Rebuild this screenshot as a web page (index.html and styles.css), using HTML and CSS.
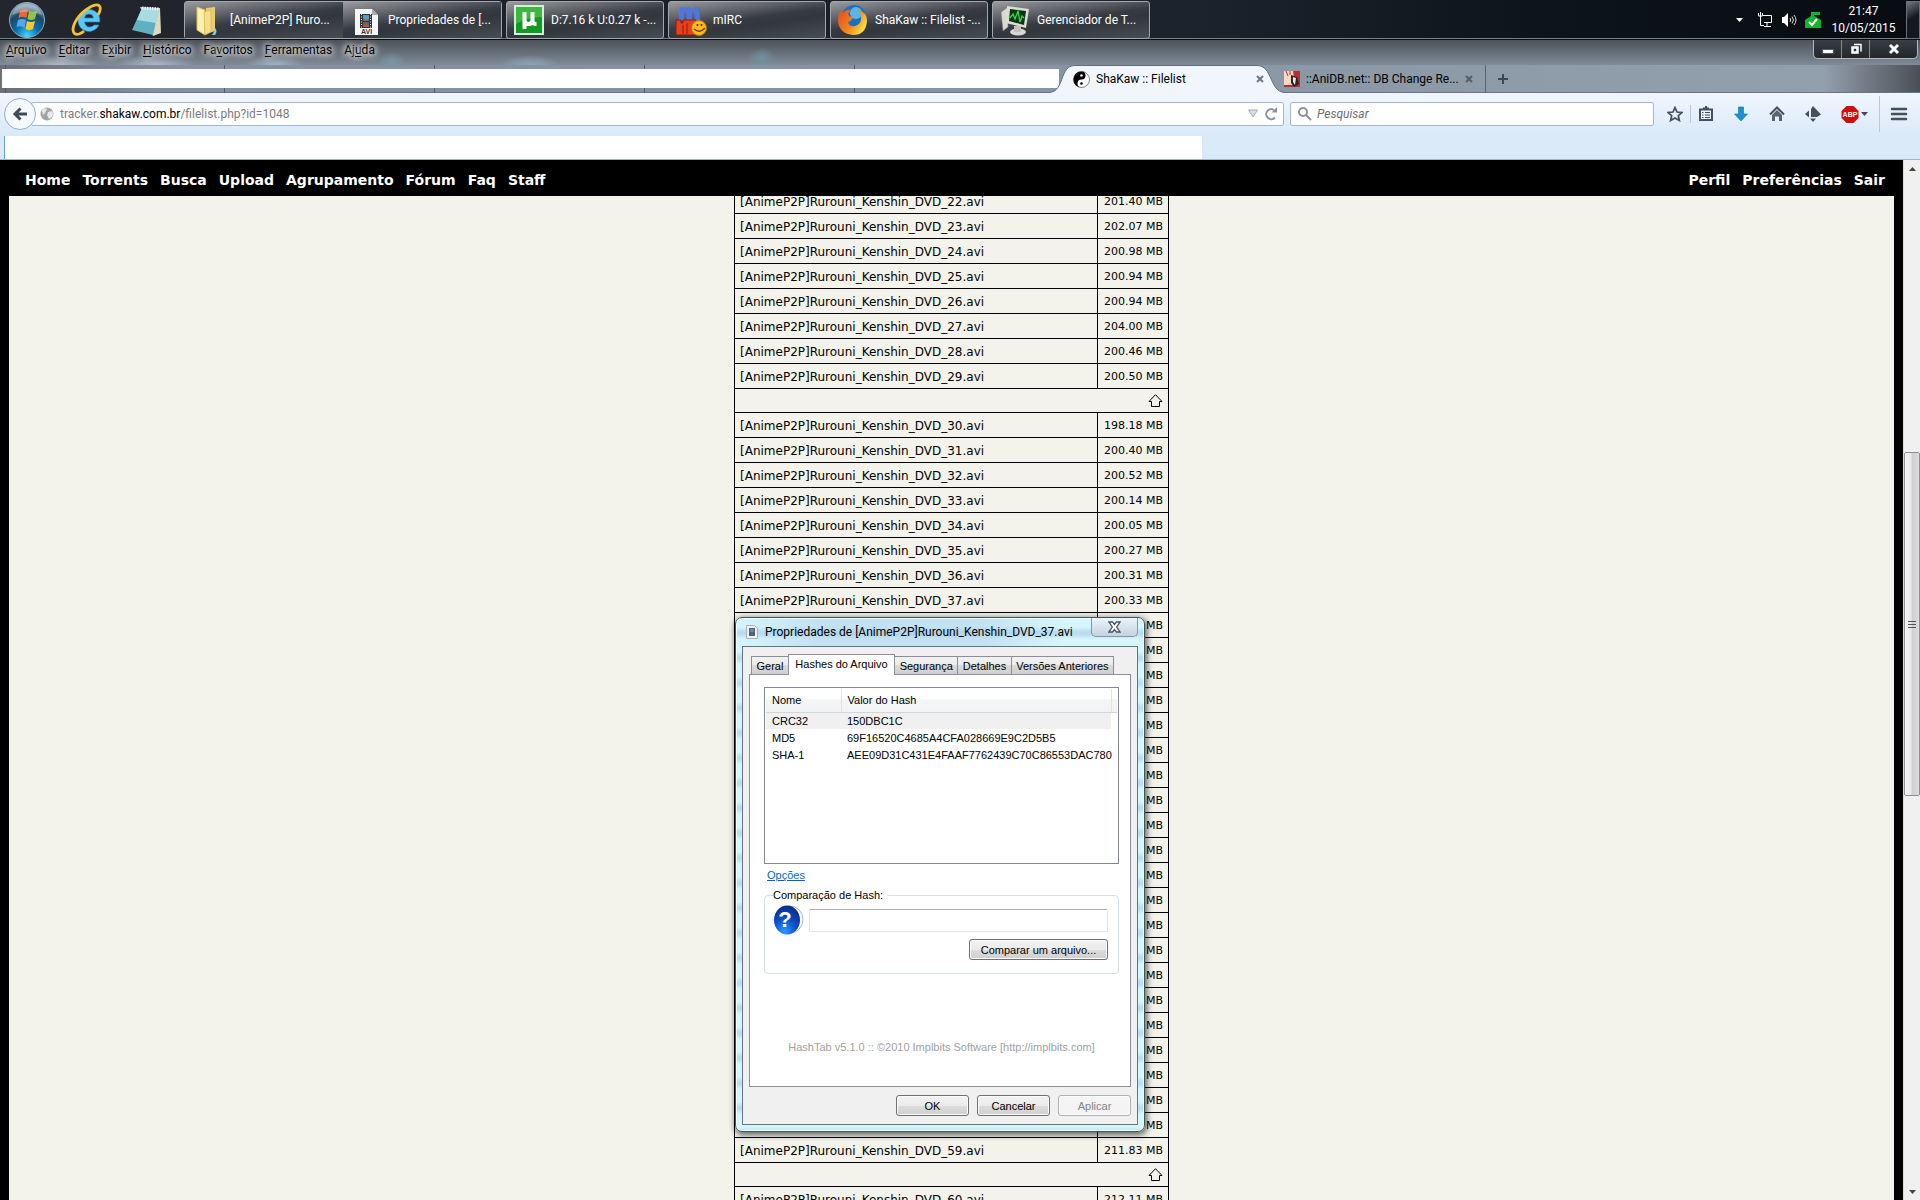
FILE: index.html
```html
<!DOCTYPE html>
<html lang="pt-BR">
<head>
<meta charset="utf-8">
<title>ShaKaw :: Filelist</title>
<link rel="stylesheet" href="styles.css">
</head>
<body>
<header class="taskbar">
  <div class="launchers">
    <button class="launch" aria-label="Iniciar"><svg width="38" height="38" viewBox="0 0 38 38"><defs><radialGradient id="orb" cx=".5" cy=".95" r=".85"><stop offset="0" stop-color="#3fd8ff"/><stop offset=".4" stop-color="#0c6dac"/><stop offset=".75" stop-color="#1d4766"/><stop offset="1" stop-color="#7d99ab"/></radialGradient></defs><circle cx="19" cy="19" r="17.500" fill="url(#orb)" stroke="#8fb0c4"/><path d="M12 10q4-3 8-1l-1.500 8q-4-2-8 0z" fill="#f0652f"/><path d="M21 10q4 2 8 0l-2 8q-4 2-7.500 0z" fill="#8ec63f"/><path d="M10 19q4-2 8 0l-1.500 8q-4-3-8-1z" fill="#4fa9ea"/><path d="M19 20q4 2 8 0l-2 8q-4 2-7.500 0z" fill="#fbc928"/><path d="M4 14a15.500 15.500 0 0 1 30 0q-15-7-30 0z" fill="#fff" opacity=".28"/></svg></button>
    <button class="launch" aria-label="Internet Explorer"><svg width="34" height="34" viewBox="0 0 34 34"><path d="M28 22a11 11 0 1 1 .8-6.500v3.500H13.500q1 5 5 5 3 0 4.500-2zM13.500 15h9q-.5-4-4.500-4t-4.500 4z" fill="#5cc6f5" stroke="#1f84c4" stroke-width=".7"/><path d="M27 12q4-7 1-9.500C24 0 12 7 6 16S1 33 8 31q3-1 5-3" fill="none" stroke="#f6c12e" stroke-width="2.800"/></svg></button>
    <button class="launch" aria-label="Bloco de notas"><svg width="34" height="34" viewBox="0 0 34 34"><path d="M10 4l20 1 1 25-8 3z" fill="#dcd9c0"/><path d="M12 5l17 1-6 26L2 27z" fill="#5fb1c2"/><path d="M12 5l17 1-3 14-19-3z" fill="#a9dbe3"/><path d="M12 5l17 1" stroke="#eef" stroke-width="3" stroke-dasharray="1.500 1"/></svg></button>
  </div>
  <nav class="tasks" aria-label="Janelas">
    <div class="group">
      <button class="task"><svg class="ti" viewBox="0 0 32 32"><path d="M14 4l9-1v24l-9 3z" fill="#e8cf73"/><path d="M5 3l8 3v25l-8-5z" fill="#fdf0aa" stroke="#d9bd5c"/><path d="M12 8l7-2v22l-6 3z" fill="#f6df8b" stroke="#cfae4b" stroke-width=".6"/><path d="M23 24q3 3 0 7h-3q3-4 3-7z" fill="#8cc9ec"/></svg><span>[AnimeP2P] Ruro...</span></button>
      <button class="task"><svg class="ti" viewBox="0 0 32 32"><path d="M5 5h17l6 6v20H5z" fill="#f6f6f6"/><path d="M22 5v6h6z" fill="#aaa"/><path d="M10 10h12v14H10z" fill="#333"/><path d="M13 11h6v6h-6z" fill="#4c9fd0"/><path d="M13 18h6v5h-6z" fill="#3b6d9e"/><path d="M13 14l3 2 3-1v2h-6zM13 21l3-1 3 2v1h-6z" fill="#c55135"/><path d="M11.500 10v14M20.500 10v14" stroke="#eee" stroke-dasharray="1 1.500"/><text x="16.500" y="30" text-anchor="middle" font-size="7" font-weight="700" fill="#333">AVI</text></svg><span>Propriedades de [...</span></button>
    </div>
    <button class="task"><svg class="ti" viewBox="0 0 32 32"><path d="M1 1h30v30H1z" fill="#d5efda"/><path d="M3 3h26v26H3z" fill="#109a23"/><path d="M3 3h26v10Q14 13 3 20z" fill="#3cb83f"/><path d="M11.500 8v17M11.500 8v8q0 4 4 4t4-4V8v9q0 3 4 3" fill="none" stroke="#fff" stroke-width="4"/></svg><span>D:7.16 k U:0.27 k -...</span></button>
    <button class="task"><svg class="ti" viewBox="0 0 32 32"><g class="wide-face"><text x="3" y="16" font-size="22" font-weight="700" fill="#4f76dc" stroke="#4f76dc" stroke-width="1.500">m</text></g><path d="M1 16h5v3h2v-3h13v8h-5l5 7H1z" fill="#e8401c" stroke="#8d1c08"/><path d="M12 19v11M8 21v9" stroke="#8d1c08"/><circle cx="24" cy="24" r="7.500" fill="#fdbb1f" stroke="#c77405"/><path d="M19 25q6 5 11-1" fill="none" stroke="#7c3a00" stroke-width="1.500"/><circle cx="22.500" cy="21" r="1" fill="#612"/><circle cx="26.500" cy="21" r="1" fill="#612"/></svg><span>mIRC</span></button>
    <button class="task"><svg class="ti" viewBox="0 0 32 32"><defs><linearGradient id="fx" x2="1" y2=".6"><stop offset="0" stop-color="#e5471e"/><stop offset=".6" stop-color="#f2851d"/><stop offset="1" stop-color="#ffe043"/></linearGradient></defs><circle cx="17" cy="13" r="12" fill="#1d6fc0"/><circle cx="19" cy="9" r="6" fill="#57b7ea"/><path d="M3 6l3 3q3-4 8-3l-3 4q1 3 5 3-1 4-5 5 1 5 7 4 7-2 6-9 0-5-4-8 10 3 10 12Q29 31 16 31 3 30 1 18q0-6 2-12z" fill="url(#fx)"/></svg><span>ShaKaw :: Filelist -...</span></button>
    <button class="task"><svg class="ti" viewBox="0 0 32 32"><path d="M2 8l7-5v20l-5 4z" fill="#d9d9d2" stroke="#777" stroke-width=".6"/><path d="M8 2l22 3-3 19-20-5z" fill="#ddddd5"/><path d="M11 5l16 2-2 14-15-4z" fill="#0a3413"/><path d="M11 14l3-4 2 5 3-8 2 11 2-6 2 2" fill="none" stroke="#2be04a" stroke-width="1.300"/><ellipse cx="19" cy="28" rx="8" ry="3.500" fill="#d8d8d2"/><path d="M15 22h7v6h-7z" fill="#c2c2bc"/></svg><span>Gerenciador de T...</span></button>
  </nav>
  <div class="tray">
    <svg width="8" height="38" viewBox="0 0 8 38"><path d="M0 17h7l-3.500 4z" fill="#fff"/></svg>
    <svg width="16" height="16" viewBox="0 0 16 16" fill="none" stroke="#fff"><path d="M5 3.500h9.500v7H7M10 11v3M7 14.500h7M1.500 1v3h4V1M3.500 0v4M3.500 4v9.500H7"/></svg>
    <svg width="16" height="16" viewBox="0 0 16 16"><path d="M1 5h2l4-4v14l-4-4H1z" fill="#fff"/><path d="M9 6q1.500 2 0 4M11 4.500q3 3.500 0 7M13 3q4 5 0 10" fill="none" stroke="#ddd"/></svg>
    <svg width="16" height="18" viewBox="0 0 16 18"><path d="M0 9l6-4V1h9v3H9v1l7 4v8H0z" fill="#12b52e"/><path d="M4 11l3 3 5-6" fill="none" stroke="#fff" stroke-width="2"/></svg>
    <div class="clock"><span>21:47</span><span>10/05/2015</span></div>
    <button class="peek" aria-label="Mostrar área de trabalho"></button>
  </div>
</header>

<section class="chrome">
  <div class="menurow">
    <nav class="menus" aria-label="Menu">
      <a href="#"><u>A</u>rquivo</a><a href="#"><u>E</u>ditar</a><a href="#">E<u>x</u>ibir</a><a href="#"><u>H</u>istórico</a><a href="#">Fa<u>v</u>oritos</a><a href="#"><u>F</u>erramentas</a><a href="#">Aj<u>u</u>da</a>
    </nav>
    <div class="winbtns">
      <button aria-label="Minimizar"><svg width="14" height="14" viewBox="0 0 14 14"><path d="M1.500 7.500h11v4h-11z" fill="#fff" stroke="#555a66"/></svg></button>
      <button aria-label="Restaurar"><svg width="14" height="14" viewBox="0 0 14 14" fill="none"><path d="M5 2.500h7v7" stroke="#fff" stroke-width="1.500"/><path d="M3.500 5.500h5v5h-5z" stroke="#fff" stroke-width="2.500"/></svg></button>
      <button class="wclose" aria-label="Fechar"><svg width="14" height="14" viewBox="0 0 14 14"><path d="M3 3l8 8M11 3l-8 8" stroke="#fff" stroke-width="3"/></svg></button>
    </div>
  </div>
  <div class="tabrow">
    <div class="hiddentabs"><div class="blanktabs"></div></div>
    <div class="tab active">
      <svg class="shape" viewBox="0 0 236 28" preserveAspectRatio="none"><path d="M0 27.500C16 27 10 .5 26 .5H208C224 .5 220 27 236 27.500V28H0z" fill="#f1f6fd"/><path d="M0 27.500C16 27 10 .5 26 .5H208C224 .5 220 27 236 27.500" fill="none" stroke="#5e6f82"/></svg>
      <svg width="17" height="17" viewBox="0 0 17 17"><circle cx="8.500" cy="8.500" r="8" fill="#fff" stroke="#333" stroke-width=".6"/><path d="M8.500.5a8 8 0 0 0 0 16a4 4 0 0 1 0-8a4 4 0 0 0 0-8z" fill="#000"/><circle cx="8.500" cy="4.500" r="1.300" fill="#fff"/><circle cx="8.500" cy="12.500" r="1.300" fill="#000"/></svg>
      <span class="tabtext">ShaKaw :: Filelist</span>
      <button class="x" aria-label="Fechar aba"><svg width="8" height="8" viewBox="0 0 8 8"><path d="M1 1l6 6M7 1l-6 6" stroke="#6c7783" stroke-width="2"/></svg></button>
    </div>
    <div class="tab second">
      <svg width="16" height="16" viewBox="0 0 16 16"><path d="M0 0h16v16H0z" fill="#c22a2f"/><path d="M0 0h9l2 14H0z" fill="#f3d9c6"/><path d="M2 0l2 5M6 0v4" stroke="#c22a2f"/><path d="M7 4l6 2 2 7-5 3-3-4z" fill="#2a2328"/><path d="M9 6l3 1-1 7-2-3z" fill="#e9ebee"/></svg>
      <span class="tabtext">::AniDB.net:: DB Change Re...</span>
      <button class="x" aria-label="Fechar aba"><svg width="8" height="8" viewBox="0 0 8 8"><path d="M1 1l6 6M7 1l-6 6" stroke="#535e69" stroke-width="2"/></svg></button>
    </div>
    <button class="plus" aria-label="Nova aba"><svg width="12" height="12" viewBox="0 0 12 12"><path d="M6 1v10M1 6h10" stroke="#3d4853" stroke-width="2"/></svg></button>
  </div>
  <div class="navrow">
    <button class="back" aria-label="Voltar"><svg width="16" height="16" viewBox="0 0 16 16"><path d="M15 8H4M8.500 2.500L3 8l5.500 5.500" fill="none" stroke="#3f4a56" stroke-width="3"/></svg></button>
    <div class="url">
      <svg width="14" height="14" viewBox="0 0 14 14"><circle cx="7" cy="7" r="6.500" fill="#a2a4a6"/><path d="M2 3q3-3 5-1L5 6 3 8zM8 5l4-1q2 3 0 6l-3 2-2-4z" fill="#e8e8e8"/></svg>
      <span class="addr">tracker.<b>shakaw.com.br</b>/filelist.php?id=1048</span>
      <svg width="10" height="9" viewBox="0 0 10 9"><path d="M.5 1h9L5 8z" fill="#d7dfe8" stroke="#9ca9b6"/></svg>
      <svg width="14" height="14" viewBox="0 0 14 14"><path d="M11 10.500A5 5 0 1 1 10 3" fill="none" stroke="#8593a1" stroke-width="2"/><path d="M7.500 5.500H13V0z" fill="#8593a1"/></svg>
    </div>
    <label class="search"><svg width="15" height="15" viewBox="0 0 15 15" fill="none" stroke="#8d9298" stroke-width="2"><circle cx="6" cy="6" r="4"/><path d="M9 9l5 5"/></svg><input type="text" placeholder="Pesquisar" aria-label="Pesquisar"></label>
    <div class="tools">
      <div class="pair">
        <button aria-label="Favorito"><svg width="16" height="16" viewBox="0 0 16 16"><path d="M8 1.500l2 4.500 5 .5-3.700 3.200 1.100 4.800L8 12l-4.400 2.500 1.100-4.800L1 6.500 6 6z" fill="none" stroke="#46505b" stroke-width="1.700"/></svg></button>
        <i class="sep"></i>
        <button aria-label="Lista"><svg width="16" height="16" viewBox="0 0 16 16" fill="none" stroke="#46505b"><path d="M2 3.500h12v10.500H2z" stroke-width="2"/><path d="M5 2.500h6M7 1h2" stroke-width="2"/><path d="M4 6.500h1.500M7 6.500h5M4 9h1.500M7 9h5M4 11.500h1.500M7 11.500h5"/></svg></button>
      </div>
      <button aria-label="Downloads"><svg width="16" height="16" viewBox="0 0 16 16"><path d="M5.500 1h5v7h4L8 15 1.500 8h4z" fill="#1c92d2" stroke="#0e6fa8" stroke-width=".6"/></svg></button>
      <button aria-label="Início"><svg width="16" height="16" viewBox="0 0 16 16"><path d="M1 8.500l7-7 7 7" fill="none" stroke="#46505b" stroke-width="2"/><path d="M3 9l5-5 5 5v6h-3v-4.500H6V15H3z" fill="#59636e"/></svg></button>
      <button aria-label="Complemento"><svg width="18" height="16" viewBox="0 0 18 16" fill="#46505b"><path d="M9 0l8 8.500-4 2.500H7V3zM1 8l4-3.500v7zM6 12.500h6L9 16z"/></svg></button>
      <div class="pair end">
        <button aria-label="Adblock Plus"><svg width="28" height="18" viewBox="0 0 28 18"><path d="M5.500 1h7l5 5v7l-5 5h-7l-5-5V6z" fill="#d00c0c"/><text x="9" y="12" text-anchor="middle" font-size="7" font-weight="700" fill="#fff">ABP</text><path d="M20 7h7l-3.500 4z" fill="#3d4853"/></svg></button>
        <i class="sep tall"></i>
        <button aria-label="Abrir menu"><svg width="18" height="14" viewBox="0 0 18 14"><path d="M2 2h14M2 7h14M2 12h14" stroke="#46505b" stroke-width="2.500" stroke-linecap="round"/></svg></button>
      </div>
    </div>
  </div>
  <div class="bookrow"><div class="blankbooks"></div></div>
</section>

<section class="view">
  <main class="site">
    <nav class="sitenav" aria-label="Site">
      <div><a href="#">Home</a><a href="#">Torrents</a><a href="#">Busca</a><a href="#">Upload</a><a href="#">Agrupamento</a><a href="#">Fórum</a><a href="#">Faq</a><a href="#">Staff</a></div>
      <div><a href="#">Perfil</a><a href="#">Preferências</a><a href="#">Sair</a></div>
    </nav>
    <div class="paper">
      <table class="files">
        <tbody>
          <tr><td>[AnimeP2P]Rurouni_Kenshin_DVD_22.avi</td><td>201.40 MB</td></tr>
          <tr><td>[AnimeP2P]Rurouni_Kenshin_DVD_23.avi</td><td>202.07 MB</td></tr>
          <tr><td>[AnimeP2P]Rurouni_Kenshin_DVD_24.avi</td><td>200.98 MB</td></tr>
          <tr><td>[AnimeP2P]Rurouni_Kenshin_DVD_25.avi</td><td>200.94 MB</td></tr>
          <tr><td>[AnimeP2P]Rurouni_Kenshin_DVD_26.avi</td><td>200.94 MB</td></tr>
          <tr><td>[AnimeP2P]Rurouni_Kenshin_DVD_27.avi</td><td>204.00 MB</td></tr>
          <tr><td>[AnimeP2P]Rurouni_Kenshin_DVD_28.avi</td><td>200.46 MB</td></tr>
          <tr><td>[AnimeP2P]Rurouni_Kenshin_DVD_29.avi</td><td>200.50 MB</td></tr>
          <tr class="up"><td colspan="2"><a href="#" aria-label="Topo"><svg width="15" height="13" viewBox="0 0 15 13"><path d="M7.500 .7L14 7.500h-2.500v5h-8v-5H1z" fill="none" stroke="#000"/></svg></a></td></tr>
          <tr><td>[AnimeP2P]Rurouni_Kenshin_DVD_30.avi</td><td>198.18 MB</td></tr>
          <tr><td>[AnimeP2P]Rurouni_Kenshin_DVD_31.avi</td><td>200.40 MB</td></tr>
          <tr><td>[AnimeP2P]Rurouni_Kenshin_DVD_32.avi</td><td>200.52 MB</td></tr>
          <tr><td>[AnimeP2P]Rurouni_Kenshin_DVD_33.avi</td><td>200.14 MB</td></tr>
          <tr><td>[AnimeP2P]Rurouni_Kenshin_DVD_34.avi</td><td>200.05 MB</td></tr>
          <tr><td>[AnimeP2P]Rurouni_Kenshin_DVD_35.avi</td><td>200.27 MB</td></tr>
          <tr><td>[AnimeP2P]Rurouni_Kenshin_DVD_36.avi</td><td>200.31 MB</td></tr>
          <tr><td>[AnimeP2P]Rurouni_Kenshin_DVD_37.avi</td><td>200.33 MB</td></tr>
          <tr><td></td><td>MB</td></tr>
          <tr><td></td><td>MB</td></tr>
          <tr><td></td><td>MB</td></tr>
          <tr><td></td><td>MB</td></tr>
          <tr><td></td><td>MB</td></tr>
          <tr><td></td><td>MB</td></tr>
          <tr><td></td><td>MB</td></tr>
          <tr><td></td><td>MB</td></tr>
          <tr><td></td><td>MB</td></tr>
          <tr><td></td><td>MB</td></tr>
          <tr><td></td><td>MB</td></tr>
          <tr><td></td><td>MB</td></tr>
          <tr><td></td><td>MB</td></tr>
          <tr><td></td><td>MB</td></tr>
          <tr><td></td><td>MB</td></tr>
          <tr><td></td><td>MB</td></tr>
          <tr><td></td><td>MB</td></tr>
          <tr><td></td><td>MB</td></tr>
          <tr><td></td><td>MB</td></tr>
          <tr><td></td><td>MB</td></tr>
          <tr><td></td><td>MB</td></tr>
          <tr><td>[AnimeP2P]Rurouni_Kenshin_DVD_59.avi</td><td>211.83 MB</td></tr>
          <tr class="up"><td colspan="2"><a href="#" aria-label="Topo"><svg width="15" height="13" viewBox="0 0 15 13"><path d="M7.500 .7L14 7.500h-2.500v5h-8v-5H1z" fill="none" stroke="#000"/></svg></a></td></tr>
          <tr><td>[AnimeP2P]Rurouni_Kenshin_DVD_60.avi</td><td>212.11 MB</td></tr>
        </tbody>
      </table>
    </div>
  </main>
  <div class="scroll">
    <svg width="17" height="17" viewBox="0 0 17 17"><path d="M5 11h7L8.500 7z" fill="#444"/></svg>
    <div class="track"><div class="thumb"><svg width="9" height="9" viewBox="0 0 9 9"><path d="M0 1.500h8M0 4.500h8M0 7.500h8" stroke="#555"/></svg></div></div>
    <svg width="17" height="17" viewBox="0 0 17 17"><path d="M5 7h7l-3.500 4z" fill="#444"/></svg>
  </div>
</section>

<section class="dialog" role="dialog" aria-labelledby="dlgtitle">
  <div class="dtitle">
    <svg width="12" height="14" viewBox="0 0 12 14"><path d="M.5.5h8l3 3v10H.5z" fill="#eef1f3" stroke="#aab2b8"/><path d="M3 3h6v8H3z" fill="#5c6066"/><path d="M4 4h4v3H4z" fill="#3d95cc"/></svg>
    <h1 id="dlgtitle">Propriedades de [AnimeP2P]Rurouni_Kenshin_DVD_37.avi</h1>
    <button class="dclose" aria-label="Fechar"><svg width="13" height="12" viewBox="0 0 13 12"><path d="M1 1h3.500l2 2.500 2-2.500H12L8.700 6l3.300 5H8.500l-2-2.500-2 2.500H1l3.300-5z" fill="#fff" stroke="#4c5263" stroke-width="1.300"/></svg></button>
  </div>
  <div class="dbody">
    <div class="dtabs" role="tablist">
      <button role="tab">Geral</button><button role="tab" class="on">Hashes do Arquivo</button><button role="tab">Segurança</button><button role="tab">Detalhes</button><button role="tab">Versões Anteriores</button>
    </div>
    <div class="panel">
      <div class="listbox">
        <table class="hashes">
          <thead><tr><th>Nome</th><th>Valor do Hash</th><th></th></tr></thead>
          <tbody>
            <tr class="sel"><td>CRC32</td><td>150DBC1C</td></tr>
            <tr><td>MD5</td><td>69F16520C4685A4CFA028669E9C2D5B5</td></tr>
            <tr><td>SHA-1</td><td>AEE09D31C431E4FAAF7762439C70C86553DAC780</td></tr>
          </tbody>
        </table>
      </div>
      <a class="opts" href="#">Opções</a>
      <fieldset class="cmp">
        <legend><label for="hash">Comparação de Hash:</label></legend>
        <div class="cmprow">
          <svg width="32" height="30" viewBox="0 0 32 30"><defs><radialGradient id="qb" cx=".4" cy=".9" r=".9"><stop offset="0" stop-color="#2f9bff"/><stop offset=".5" stop-color="#0c4fc9"/><stop offset="1" stop-color="#0a2c8c"/></radialGradient></defs><ellipse cx="17" cy="14.500" rx="13" ry="13.500" fill="#fff" stroke="#a9b0d8"/><ellipse cx="14" cy="15" rx="13" ry="14.500" fill="url(#qb)"/><text x="12" y="22" text-anchor="middle" font-size="22" font-weight="700" fill="#fff">?</text></svg>
          <input id="hash" type="text">
        </div>
        <button class="btn wide">Comparar um arquivo...</button>
      </fieldset>
      <p class="credit">HashTab v5.1.0 :: ©2010 Implbits Software [http://implbits.com]</p>
    </div>
    <div class="dfoot"><button class="btn">OK</button><button class="btn">Cancelar</button><button class="btn" disabled>Aplicar</button></div>
  </div>
</section>
</body>
</html>
```
FILE: styles.css
```css
* { box-sizing: border-box; }
body {
  margin: 0;
  height: 100vh;
  display: flex;
  flex-direction: column;
  overflow: hidden;
  position: relative;
  font: 12px/16px Roboto, "Open Sans", sans-serif;
  color: #000;
}
button { font: inherit; color: inherit; padding: 0; border: 0; background: none; display: flex; align-items: center; justify-content: center; }
svg { flex: none; display: block; }
a { color: inherit; text-decoration: none; }
svg text { font-family: "Liberation Sans", sans-serif; }
.wide-face text { font-family: "DejaVu Sans", sans-serif; }

/* taskbar */
.taskbar {
  height: 40px;
  flex: none;
  display: flex;
  background: linear-gradient(90deg, #23262c, #1a2027 40%, #1b242d 62%, #0d141b 80%, #080c12);
  border-bottom: 1px solid #0a0d10;
  box-shadow: inset 0 -1px #77828a;
  color: #fff;
}
.launchers { display: flex; width: 184px; padding-left: 8px; gap: 25px; align-items: center; }
.tasks { display: flex; gap: 4px; height: 39px; padding-top: 1px; }
.group { display: flex; border: 1px solid #a5a8ab; border-radius: 3px; }
.task {
  width: 158px;
  justify-content: flex-start;
  gap: 6px;
  padding-left: 6px;
  white-space: nowrap;
  border: 1px solid #a5a8ab;
  border-radius: 3px;
  background: linear-gradient(172deg, #9b9ba0 0, #5d6066 30%, #373c42 48%, #31373d 60%, #474d53);
}
.group .task { border: 0; border-radius: 0; padding-left: 7px; }
.ti { width: 32px; height: 32px; }
.tray { margin-left: auto; display: flex; align-items: center; gap: 8px; }
.tray > svg:first-child { margin-right: 5px; }
.clock { width: 69px; display: flex; flex-direction: column; align-items: center; line-height: 17px; }
.peek { width: 14px; height: 38px; border: 1px solid #6c7176; background: linear-gradient(150deg, #75797d, #15191d 45%); }

/* browser chrome */
.chrome { flex: none; display: flex; flex-direction: column; background: #dbeaf9; border-bottom: 1px solid #9fb5c9; }
.menurow {
  height: 25px;
  display: flex;
  justify-content: space-between;
  background:
    radial-gradient(ellipse 14px 10px at 392px 22px, #7796a8, transparent),
    radial-gradient(ellipse 14px 10px at 762px 18px, #6f929f, transparent),
    radial-gradient(ellipse 40px 10px at 60px 25px, #b0b9c8, transparent),
    radial-gradient(ellipse 40px 10px at 155px 25px, #b0b9c8, transparent),
    radial-gradient(ellipse 30px 10px at 275px 25px, #a3b2c4, transparent),
    radial-gradient(ellipse 30px 10px at 530px 25px, #8da5b8, transparent),
    linear-gradient(#4c5259, #808b98);
}
.menus { display: flex; gap: 12px; padding: 2px 6px; text-shadow: 0 0 6px #fff, 0 0 6px #ddd, 0 0 8px #ccc; }
.menus u { text-underline-offset: 2px; }
.winbtns { display: flex; height: 19px; margin-right: 2px; border: 1px solid #b3b9be; border-top: 0; border-radius: 0 0 5px 5px; background: linear-gradient(#3a3e43, #23262a); overflow: hidden; }
.winbtns button { width: 28px; border-right: 1px solid #868c92; }
.winbtns .wclose { width: 47px; border: 0; }
.tabrow {
  height: 28px;
  display: flex;
  align-items: stretch;
  background: linear-gradient(90deg, #6b6f76, #8390a0 8%, #8693a1 50%, #929fac 95%, #4b5056);
  box-shadow: inset 0 -1px #66778a;
}
.hiddentabs { flex: 0 1 auto; padding: 4px 0 5px 2px; background: repeating-linear-gradient(90deg, transparent 0 209px, #4f5c69 209px 210px) 15px 0; }
.blanktabs { width: 1057px; max-width: 100%; height: 19px; background: #fff; }
.tab { position: relative; display: flex; align-items: center; }
.active { width: 220px; padding: 0 15px 0 14px; gap: 6px; }
.shape { position: absolute; left: -10px; top: 0; width: 236px; height: 28px; }
.shape ~ * { position: relative; }
.tabtext { flex: 1; white-space: nowrap; }
.second { width: 207px; padding: 0 12px 0 5px; gap: 6px; border-right: 1px solid #566371; }
.plus { width: 34px; }
.navrow { height: 41px; display: flex; align-items: center; padding: 0 8px 0 4px; background: linear-gradient(#f1f6fd, #dbeaf9); }
.back { width: 32px; height: 32px; border: 1px solid #96acc4; border-radius: 50%; background: #f4f9fe; flex: none; position: relative; }
.url, .search { height: 24px; display: flex; align-items: center; background: #fff; border: 1px solid #a3b9d2; border-radius: 2px; }
.url { flex: 1; margin-left: -5px; padding: 0 5px 0 8px; gap: 6px; color: #7c7c7c; }
.addr { flex: 1; }
.addr b { font-weight: 400; color: #000; }
.search { width: 364px; margin-left: 6px; padding: 0 6px; gap: 5px; }
.search input { flex: 1; min-width: 0; border: 0; padding: 0; background: none; font: italic 12px/16px Roboto, sans-serif; outline: 0; }
.search input::placeholder { color: #6c6c6c; }
.tools { width: 258px; display: flex; align-items: center; justify-content: space-between; padding: 0 4px 0 13px; }
.pair { display: flex; align-items: center; gap: 7px; }
.end { gap: 10px; }
.sep { width: 1px; height: 18px; background: #b6c8da; }
.tall { height: 36px; }
.bookrow { height: 25px; padding: 2px 0 0 4px; }
.blankbooks { width: 63%; max-width: 1198px; height: 23px; background: #fff; border-left: 1px solid #6aa0cc; }

/* page viewport */
.view { flex: 1; min-height: 0; display: flex; overflow: hidden; }
.site { flex: 1; display: flex; flex-direction: column; background: #000; padding: 0 9px; }
.sitenav {
  height: 36px;
  flex: none;
  display: flex;
  justify-content: space-between;
  align-items: center;
  padding: 4px 9px 0 16px;
  background: #000;
  color: #fff;
  font: bold 14px/16px "DejaVu Sans", sans-serif;
  position: relative;
  z-index: 1;
}
.sitenav div { display: flex; gap: 12px; }
.paper { flex: 1; min-height: 0; background: #f3f3eb; display: flex; justify-content: center; align-items: flex-start; }
.files {
  width: 435px;
  margin-top: -8px;
  border-collapse: collapse;
  table-layout: fixed;
  font: 12px/14px "DejaVu Sans", sans-serif;
}
.files td { height: 25px; padding: 6px 5px 4px; border: 1px solid #000; white-space: nowrap; }
.files td:nth-child(2) { width: 71px; text-align: right; font-size: 11px; }
.files td:first-child { width: 363px; }
.files .up td { height: 24px; padding: 0 5px; }
.files .up a { display: flex; justify-content: flex-end; }
.scroll { width: 17px; display: flex; flex-direction: column; background: #f0f0f0; border-left: 1px solid #dcdcdc; }
.track { flex: 1; display: flex; flex-direction: column; }
.track::before { content: ""; flex: 276; }
.track::after { content: ""; flex: 388; }
.thumb { flex: 342; border: 1px solid #8e9095; border-radius: 2px; background: linear-gradient(90deg, #f6f6f6, #e6e6e8 45%, #cfcfd3 50%, #dcdcdf); display: flex; align-items: center; justify-content: center; }

/* properties dialog */
.dialog {
  position: absolute;
  left: calc(50% - 225px);
  top: 617px;
  width: 410px;
  padding: 0 6px 6px;
  border: 1px solid #3f5560;
  border-radius: 7px;
  background:
    linear-gradient(90deg, transparent, rgba(176, 205, 232, .5) 20% 60%, transparent 80%) 0 0 / 100% 28px no-repeat,
    repeating-linear-gradient(#d5f6fd 0 9px, #b9dcf0 14px 16px, #d5f6fd 21px 25px);
  box-shadow: inset 0 0 0 1px #f3ffff, 1px 2px 6px 1px rgba(0, 0, 0, .6);
  font: 11px/16px "Liberation Sans", sans-serif;
}
.dtitle { display: flex; height: 28px; padding-left: 4px; gap: 7px; align-items: center; }
.dtitle h1 { margin: 0; flex: 1; min-width: 0; font: 12px/16px Roboto, sans-serif; white-space: nowrap; }
.dclose { width: 47px; height: 19px; flex: none; align-self: flex-start; border: 1px solid #8597a6; border-top: 0; border-radius: 0 0 5px 5px; background: linear-gradient(#eaf6fb, #c3d3df); }
.dbody { background: #f0f0f0; border: 1px solid #69757e; padding: 7px 6px 8px; }
.dtabs { display: flex; align-items: flex-end; height: 20px; padding-left: 2px; margin-right: 18px; }
.dtabs button { height: 18px; padding: 0 4px; flex: auto; border: 1px solid #8b8e98; border-bottom: 0; margin-right: -1px; background: linear-gradient(#f2f2f2, #ebebeb 50%, #dadada 50%, #d0d0d0); white-space: nowrap; }
.dtabs .on { height: 21px; margin-bottom: -1px; padding: 0 6px 2px; position: relative; background: #fff; }
.panel { border: 1px solid #8b8e98; background: #fff; padding: 12px 11px 31px 14px; display: flex; flex-direction: column; }
.listbox { height: 177px; border: 1px solid #828790; padding: 1px; }
.hashes { width: 100%; border-collapse: collapse; table-layout: fixed; }
.hashes th { height: 23px; font-weight: 400; text-align: left; padding: 0 6px; background: linear-gradient(#fff 45%, #f4f5f7 46%, #f1f2f4); border-bottom: 1px solid #d5d5d5; border-right: 1px solid #e1e3e6; }
.hashes th:first-child { width: 75px; }
.hashes th:last-child { width: 6px; border-right: 0; padding: 0; }
.hashes td { height: 17px; padding: 0 6px; line-height: 16px; white-space: nowrap; }
.sel td { background: #f0f0f0; }
.opts { align-self: flex-start; margin: 3px 0 4px 3px; color: #0066cc; text-decoration: underline; }
.cmp { margin: 0; padding: 2px 10px 13px 8px; border: 1px solid #d5dfe5; border-radius: 4px; display: flex; flex-direction: column; }
.cmp legend { padding: 0 4px 0 0; }
.cmprow { display: flex; align-items: center; gap: 4px; height: 30px; margin-bottom: 4px; }
.cmprow input { flex: 1; height: 23px; border: 1px solid #e2e3ea; border-top-color: #abadb3; border-radius: 2px; background: #fff; }
.btn { width: 73px; height: 21px; border: 1px solid #707070; border-radius: 3px; background: linear-gradient(#f2f2f2, #ebebeb 50%, #dddddd 50%, #cfcfcf); box-shadow: inset 0 0 0 1px #fbfbfb; }
.btn:disabled { color: #838383; border-color: #adb2b5; background: #f4f4f4; }
.wide { width: 139px; align-self: flex-end; }
.credit { margin: 65px 0 0; text-align: center; color: #a0a0a0; white-space: nowrap; }
.dfoot { display: flex; justify-content: flex-end; gap: 8px; padding-top: 8px; }
```
